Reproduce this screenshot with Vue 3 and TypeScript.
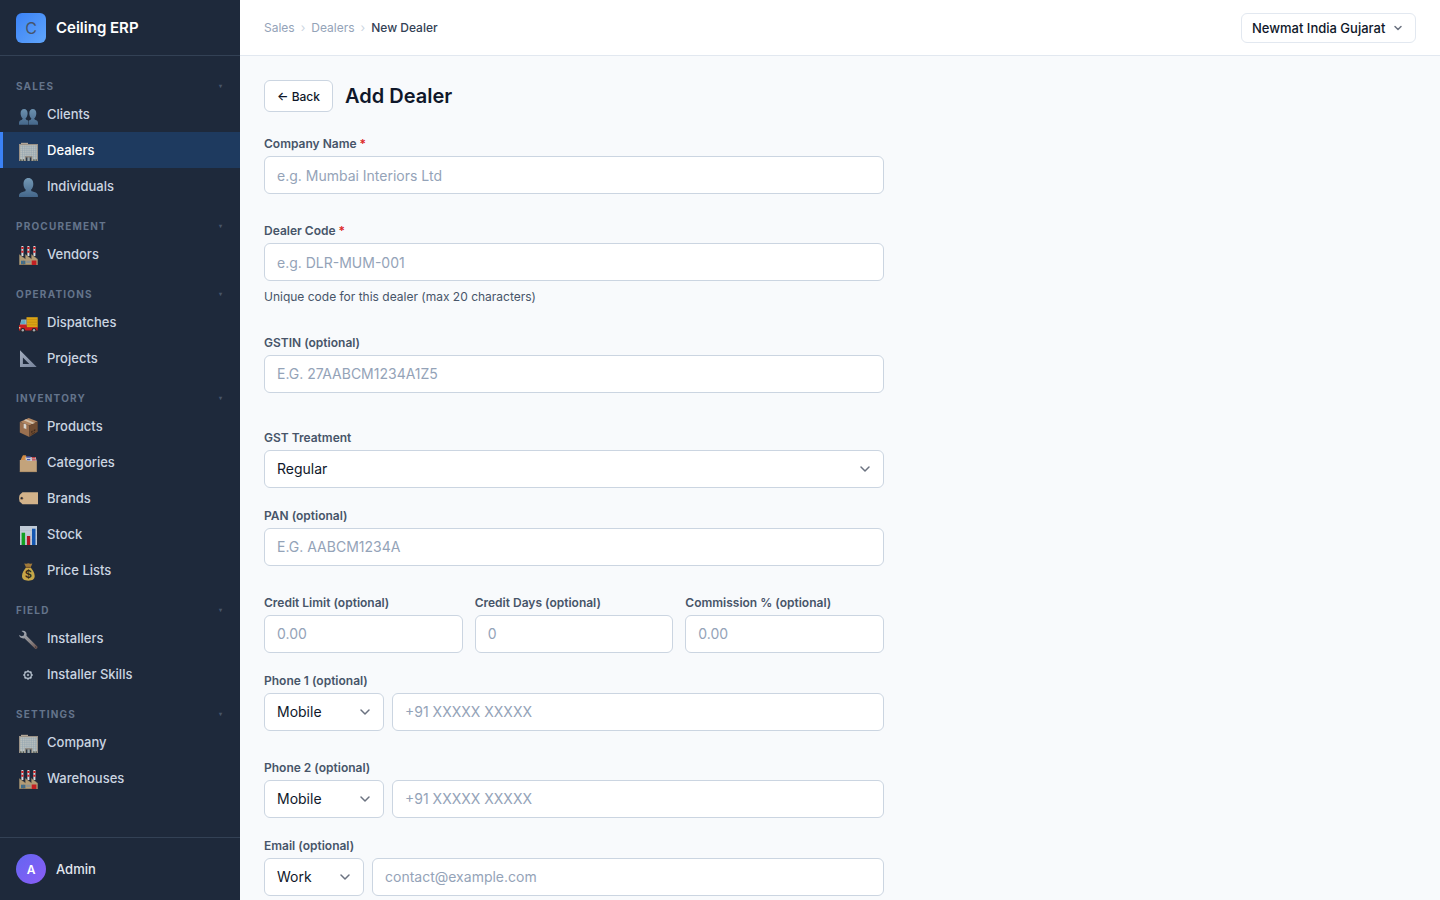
<script setup lang="ts">
import { ref } from 'vue'

interface NavItem {
  icon: string
  label: string
}
interface NavGroup {
  title: string
  items: NavItem[]
}

const groups: NavGroup[] = [
  {
    title: 'Sales',
    items: [
      { icon: 'people', label: 'Clients' },
      { icon: 'building', label: 'Dealers' },
      { icon: 'person', label: 'Individuals' },
    ],
  },
  { title: 'Procurement', items: [{ icon: 'factory', label: 'Vendors' }] },
  {
    title: 'Operations',
    items: [
      { icon: 'truck', label: 'Dispatches' },
      { icon: 'triangle', label: 'Projects' },
    ],
  },
  {
    title: 'Inventory',
    items: [
      { icon: 'box', label: 'Products' },
      { icon: 'dividers', label: 'Categories' },
      { icon: 'tag', label: 'Brands' },
      { icon: 'chart', label: 'Stock' },
      { icon: 'money', label: 'Price Lists' },
    ],
  },
  {
    title: 'Field',
    items: [
      { icon: 'wrench', label: 'Installers' },
      { icon: 'gear', label: 'Installer Skills' },
    ],
  },
  {
    title: 'Settings',
    items: [
      { icon: 'building', label: 'Company' },
      { icon: 'factory', label: 'Warehouses' },
    ],
  },
]

const active = ref('Dealers')
const collapsed = ref<string[]>([])

function toggle(title: string) {
  collapsed.value = collapsed.value.includes(title)
    ? collapsed.value.filter((t) => t !== title)
    : [...collapsed.value, title]
}

const branch = ref('Newmat India Gujarat')
const form = ref({
  company: '',
  code: '',
  gstin: '',
  treatment: 'Regular',
  pan: '',
  creditLimit: '',
  creditDays: '',
  commission: '',
  phone1Type: 'Mobile',
  phone1: '',
  phone2Type: 'Mobile',
  phone2: '',
  emailType: 'Work',
  email: '',
})
</script>

<template>
  <div class="app">
    <svg class="defs" aria-hidden="true">
      <defs>
        <linearGradient id="bust" x1="0" y1="0" x2="0" y2="20" gradientUnits="userSpaceOnUse">
          <stop offset="0" stop-color="#7398b5" />
          <stop offset="1" stop-color="#426488" />
        </linearGradient>
        <linearGradient id="steel" x1="0" y1="0" x2="1" y2="1">
          <stop offset="0" stop-color="#a9b3bf" />
          <stop offset="0.6" stop-color="#8a8688" />
          <stop offset="1" stop-color="#6a4f49" />
        </linearGradient>
        <linearGradient id="slate" x1="0" y1="0" x2="1" y2="1">
          <stop offset="0" stop-color="#a3adbe" />
          <stop offset="1" stop-color="#76829a" />
        </linearGradient>
      </defs>
      <symbol id="people" viewBox="0 0 20 20">
        <g fill="url(#bust)">
          <path d="M0 18.700v-1.700c0-2 1.200-2.800 3-3.300l.7-1.200C2.300 11.300 1.600 9.500 1.600 7.300 1.600 4.600 2.900 3 5.100 3s3.500 1.600 3.500 4.300c0 2.200-.7 4-2.100 5.200l.7 1.200c1.100.3 1.700.6 2 1.100v3.900z" />
          <path d="M9.700 18.700v-3.900c.4-.5 1-.8 2-1.100l.7-1.200c-1.400-1.200-2.100-3-2.100-5.200C10.300 4.600 11.600 3 13.800 3s3.500 1.600 3.500 4.300c0 2.200-.7 4-2.100 5.200l.7 1.200c1.900.5 3.100 1.300 3.100 3.300v1.700z" />
        </g>
      </symbol>
      <symbol id="person" viewBox="0 0 20 20">
        <path fill="url(#bust)" d="M0 19v-1.500c0-2.300 2.800-3.600 6.300-4.300l.5-1.500C5.300 10.500 4.500 8.600 4.500 6 4.500 2.400 6.300 0 9.400 0s4.900 2.400 4.900 6c0 2.600-.8 4.500-2.300 5.700l.5 1.500c3.600.7 6.400 2 6.400 4.300V19z" />
      </symbol>
      <symbol id="building" viewBox="0 0 20 20">
        <path fill="#b3a797" d="M2 .8h7v1.700H2z" />
        <path fill="#9a9186" d="M0 2h19v17H0z" />
        <path fill="#bcc2bf" d="M1.200 3.200h16.600V18.500H1.200z" />
        <path stroke="#8fa3ae" stroke-width="0.500" d="M1.200 4.700h16.600M1.200 6.700h16.600M1.200 8.700h16.600M1.200 10.700h16.600M1.200 12.700h16.600M1.200 14.700h16.600M3.500 3.400v15M5.700 3.400v15M7.900 3.400v15M10.100 3.400v15M12.300 3.400v15M14.500 3.400v15M16.500 3.400v15" />
        <path fill="#8b8378" d="M6 14.200h7.300V19H6z" />
        <path fill="#27384a" d="M7 15.500h1.400V19H7zM10.800 15.500h1.400V19h-1.400z" />
        <path fill="#8fa3ad" d="M8.700 15.500h1.800V19H8.700z" />
        <path fill="#4f564e" d="M1.200 17.300h1.300V19H1.200zM3.800 17.300h1.300V19H3.800zM14.300 17.300h1.300V19h-1.300zM16.600 17.300h1.200V19h-1.200z" />
      </symbol>
      <symbol id="factory" viewBox="0 0 20 20">
        <path fill="#d8dde0" d="M2.400 0h2v10h-2zM8.400 0h2v10h-2zM14.400 0h2v10h-2z" />
        <path fill="#cf2024" d="M2.300 1h2.200v2H2.300zM8.300 1h2.200v2H8.300zM14.300 1h2.200v2h-2.200zM2.300 4.800h2.200v2H2.300zM8.300 4.800h2.200v2H8.300zM14.300 4.800h2.200v2h-2.200z" />
        <path fill="#b29c76" d="M.3 8.500 6.400 13V8.500l6.100 4.500V8.500l6.200 4.700V19H.3z" />
        <path fill="none" stroke="#8c7857" stroke-width="0.500" d="m.3 8.500 6.100 4.500V8.500l6.100 4.500V8.500l6.200 4.700" />
        <path fill="#3d6d8f" d="M2 14.700h4.400v3.700H2z" />
        <path fill="#8b9294" d="M7.300 14.700h4.400V17H7.300z" />
        <path fill="#c31f23" d="M12.700 14.500h4.700V19h-4.700z" />
        <path fill="#7c6a50" d="M0 18.400h12.700v.6H0zM4 14.700h.5v3.700H4z" />
      </symbol>
      <symbol id="truck" viewBox="0 0 20 20">
        <path fill="#dca514" d="M7.500 3.200h11.200v10.600H7.500z" />
        <path stroke="#b98510" stroke-width="0.600" d="M7.500 5.600h11.200M7.500 8.200h11.200M7.500 10.800h11.200" />
        <path fill="#a7b7c0" d="M2.300 5.500h5.200v6H.8z" />
        <path fill="#61abc6" d="M2.800 6.300h3.500v3.800H1.500z" />
        <path fill="#c91e20" d="M0 11.600 1.300 10.400h6.200v2.800h11.200v3.300H0z" />
        <path fill="#e8c9a0" d="M0 13h1.400v1.400H0z" />
        <circle cx="3.800" cy="16.300" r="2.400" fill="#25282d" />
        <circle cx="15" cy="16.300" r="2.400" fill="#25282d" />
        <circle cx="3.800" cy="16.300" r="1.200" fill="#a3abb1" />
        <circle cx="15" cy="16.300" r="1.200" fill="#a3abb1" />
      </symbol>
      <symbol id="triangle" viewBox="0 0 20 20">
        <path fill="url(#slate)" fill-rule="evenodd" d="M1 .3 17.700 17H1zM3.900 7.500v6.400h6.400z" />
      </symbol>
      <symbol id="box" viewBox="0 0 20 20">
        <path fill="#b18662" d="M9.700 0 18.700 3.500 10.300 7.500.8 4z" />
        <path fill="#9a7050" d="m.8 4 9.500 3.500V19L.8 14.600z" />
        <path fill="#6f4c32" d="m10.300 7.500 8.400-4v10.300L10.300 19z" />
        <path fill="#d5c2ab" d="m4.800 2.200 2.300-1 8.700 3.700-2.400 1.200z" />
        <path fill="#d9d6d0" d="m4.700 5.500 2.600 1v4.800l-1.200-.7-1.400-.3z" />
        <path fill="#3e2b1e" d="m12.200 13.200 1.400-.8v1.800l-1.400.8zM14.700 12l1.600-.9v1.600l-1.600.9zM12.500 16l3.500-2v.7l-3.500 2z" />
      </symbol>
      <symbol id="dividers" viewBox="0 0 20 20">
        <path fill="#d08b45" d="M1.500 6.500 3 3l1-1.700h2.700L8 3v4H1.500z" />
        <path fill="#c7cad0" d="M6.500 3h10.200l1 4H6.500z" />
        <path fill="#4453a8" d="M7.300 2.200h4.300v1.600H7.300zM8 5h3.200v1.200H8z" />
        <path fill="#c33d40" d="M12.700 3h3.800v1.400h-3.800zM13 5.300h3.800v1.300H13z" />
        <path fill="#c3a37b" d="M.8 6h6.500l1.200.9h9.300V18H.8z" />
        <path stroke="#9d825e" stroke-width="0.600" d="M.8 17.700h17" />
      </symbol>
      <symbol id="tag" viewBox="0 0 20 20">
        <path fill="#d2b28a" d="M3.500 2.200H19v12H3.500L.6 11.400Q-.4 8.200.6 5z" />
        <circle cx="2.700" cy="8.200" r="1.500" fill="#8d6d4b" />
        <circle cx="2.700" cy="8.200" r="0.900" fill="#1e293b" />
      </symbol>
      <symbol id="chart" viewBox="0 0 20 20">
        <path fill="#c0cad6" d="M1 0h17v19H1z" />
        <path stroke="#a8b5c5" stroke-width="0.400" d="M1 4.500h17M1 9h17M1 13.500h17" />
        <path fill="#11a022" d="M2.600 6.700h3.500V19H2.600z" />
        <path fill="#b31525" d="M7.900 10h3.300v9H7.900z" />
        <path fill="#1456b0" d="M13 2.700h3.500V19H13z" />
      </symbol>
      <symbol id="money" viewBox="0 0 20 20">
        <path fill="#a17a3b" d="M5.200 1.400 7.300 1.800l2-.6 2 .6 2.100-.4-1.700 3.800H7z" />
        <path fill="#c7a648" d="M7 5.600h4.700c1.600 2.200 4 5 4 8.500 0 3.200-2 4.600-6.300 4.600S3 17.300 3 14.100c0-3.500 2.400-6.300 4-8.500z" />
        <path stroke="#765026" d="M6.800 5.300h5" />
      </symbol>
      <symbol id="wrench" viewBox="0 0 20 20">
        <path fill="url(#steel)" d="M2.500 1C5-.1 7.500 1.500 7.600 4.200l-.1 1.600L18.300 16.500c.9 1.100-.9 3-2.100 2.200L5.400 8.200C3.100 8.900.5 7.600.1 5.100l2.400 1.200 2.300-.8.5-2.500z" />
        <circle cx="16.600" cy="17" r="0.600" fill="#2c2b31" />
      </symbol>
      <symbol id="gear" viewBox="0 0 20 20">
        <g fill="none" stroke="#b5c0cd">
          <circle cx="9" cy="9" r="3.400" stroke-width="1.200" />
          <circle cx="9" cy="9" r="0.800" />
          <path stroke-width="1.500" d="M9 4.200v1.500M9 12.300v1.500M4.200 9h1.500M12.300 9h1.500M5.600 5.600l1 1M11.400 11.400l1 1M12.400 5.600l-1 1M6.600 11.400l-1 1" />
        </g>
      </symbol>
    </svg>

    <aside class="sidebar">
      <div class="brand">
        <span class="logo">C</span>
        <span class="brand-name">Ceiling ERP</span>
      </div>
      <nav class="nav" aria-label="Main">
        <section v-for="g in groups" :key="g.title">
          <button class="group" type="button" @click="toggle(g.title)">
            <span>{{ g.title }}</span>
            <span class="arrow">▾</span>
          </button>
          <template v-if="!collapsed.includes(g.title)">
            <a
              v-for="item in g.items"
              :key="item.label"
              href="#"
              class="item"
              :class="{ active: active === item.label }"
              @click.prevent="active = item.label"
            >
              <svg class="icon" viewBox="0 0 20 20" aria-hidden="true">
                <use :href="'#' + item.icon" />
                <text v-if="item.icon === 'money'" x="9.400" y="16" class="coin">$</text>
              </svg>
              <span>{{ item.label }}</span>
            </a>
          </template>
        </section>
      </nav>
      <div class="user">
        <span class="avatar">A</span>
        <span>Admin</span>
      </div>
    </aside>

    <div class="main">
      <header class="topbar">
        <nav class="crumbs" aria-label="Breadcrumb">
          <a href="#">Sales</a>
          <span class="sep">›</span>
          <a href="#">Dealers</a>
          <span class="sep">›</span>
          <span class="here">New Dealer</span>
        </nav>
        <div class="select branch">
          <select v-model="branch" aria-label="Branch">
            <option>Newmat India Gujarat</option>
          </select>
          <svg viewBox="0 0 12 12" aria-hidden="true"><path d="M3 4.500 6 7.500l3-3" /></svg>
        </div>
      </header>

      <main class="content">
        <div class="heading">
          <button class="back" type="button">← Back</button>
          <h1>Add Dealer</h1>
        </div>

        <form class="form" @submit.prevent>
          <div class="field roomy">
            <label for="company">Company Name <span class="req">*</span></label>
            <input id="company" v-model="form.company" type="text" placeholder="e.g. Mumbai Interiors Ltd" required />
          </div>

          <div class="field roomy">
            <label for="code">Dealer Code <span class="req">*</span></label>
            <input id="code" v-model="form.code" type="text" maxlength="20" placeholder="e.g. DLR-MUM-001" required />
            <p class="hint">Unique code for this dealer (max 20 characters)</p>
          </div>

          <div class="field spacious">
            <label for="gstin">GSTIN (optional)</label>
            <input id="gstin" v-model="form.gstin" class="upper" type="text" placeholder="e.g. 27AABCM1234A1Z5" />
          </div>

          <div class="field">
            <label for="treatment">GST Treatment</label>
            <div class="select">
              <select id="treatment" v-model="form.treatment">
                <option>Regular</option>
                <option>Composition</option>
                <option>Unregistered</option>
              </select>
              <svg viewBox="0 0 12 12" aria-hidden="true"><path d="M2 4l4 4 4-4" /></svg>
            </div>
          </div>

          <div class="field roomy">
            <label for="pan">PAN (optional)</label>
            <input id="pan" v-model="form.pan" class="upper" type="text" placeholder="e.g. AABCM1234A" />
          </div>

          <div class="columns">
            <div class="field">
              <label for="limit">Credit Limit (optional)</label>
              <input id="limit" v-model="form.creditLimit" type="text" inputmode="decimal" placeholder="0.00" />
            </div>
            <div class="field">
              <label for="days">Credit Days (optional)</label>
              <input id="days" v-model="form.creditDays" type="text" inputmode="numeric" placeholder="0" />
            </div>
            <div class="field">
              <label for="commission">Commission % (optional)</label>
              <input id="commission" v-model="form.commission" type="text" inputmode="decimal" placeholder="0.00" />
            </div>
          </div>

          <div class="field roomy">
            <label for="phone1">Phone 1 (optional)</label>
            <div class="pair">
              <div class="select">
                <select v-model="form.phone1Type" aria-label="Phone 1 type">
                  <option>Mobile</option>
                  <option>Office</option>
                </select>
                <svg viewBox="0 0 12 12" aria-hidden="true"><path d="M2 4l4 4 4-4" /></svg>
              </div>
              <input id="phone1" v-model="form.phone1" type="tel" placeholder="+91 XXXXX XXXXX" />
            </div>
          </div>

          <div class="field">
            <label for="phone2">Phone 2 (optional)</label>
            <div class="pair">
              <div class="select">
                <select v-model="form.phone2Type" aria-label="Phone 2 type">
                  <option>Mobile</option>
                  <option>Office</option>
                </select>
                <svg viewBox="0 0 12 12" aria-hidden="true"><path d="M2 4l4 4 4-4" /></svg>
              </div>
              <input id="phone2" v-model="form.phone2" type="tel" placeholder="+91 XXXXX XXXXX" />
            </div>
          </div>

          <div class="field">
            <label for="email">Email (optional)</label>
            <div class="pair narrow">
              <div class="select">
                <select v-model="form.emailType" aria-label="Email type">
                  <option>Work</option>
                  <option>Personal</option>
                </select>
                <svg viewBox="0 0 12 12" aria-hidden="true"><path d="M2 4l4 4 4-4" /></svg>
              </div>
              <input id="email" v-model="form.email" type="email" placeholder="contact@example.com" />
            </div>
          </div>
        </form>
      </main>
    </div>
  </div>
</template>

<style>
body {
  margin: 0;
}
</style>

<style scoped>
* {
  box-sizing: border-box;
}
.app {
  display: flex;
  height: 100vh;
  overflow: hidden;
  background: #f8fafc;
  color: #0f172a;
  font-family: Inter, sans-serif;
  font-size: 14px;
}
button,
input,
select {
  font-family: inherit;
}
.defs {
  position: absolute;
  width: 0;
  height: 0;
}
.coin {
  fill: #33291a;
  font-size: 11px;
  font-weight: 600;
  text-anchor: middle;
}

.sidebar {
  display: flex;
  flex-direction: column;
  flex: 0 0 240px;
  background: #1e293b;
  color: #cbd5e1;
}
.brand {
  display: flex;
  align-items: center;
  gap: 10px;
  height: 56px;
  padding: 0 16px;
  border-bottom: 1px solid #334155;
}
.logo {
  display: grid;
  place-items: center;
  width: 30px;
  height: 30px;
  border-radius: 6px;
  background: linear-gradient(135deg, #3b82f6, #60a5fa);
  color: #475569;
  font-size: 16px;
}
.brand-name {
  color: #fff;
  font-size: 15px;
  font-weight: 600;
}
.nav {
  flex: 1;
  min-height: 0;
  padding: 8px 0;
  overflow: hidden;
}
.group {
  display: flex;
  align-items: center;
  justify-content: space-between;
  width: 100%;
  padding: 16px 17px 4px 16px;
  border: 0;
  background: none;
  color: #64748b;
  font-size: 10px;
  font-weight: 700;
  line-height: 12px;
  letter-spacing: 1.2px;
  text-transform: uppercase;
  cursor: pointer;
}
.arrow {
  color: #475569;
  font-size: 6px;
}
.item {
  display: flex;
  align-items: center;
  gap: 8px;
  height: 36px;
  padding: 0 16px;
  border-left: 3px solid transparent;
  color: #cbd5e1;
  font-size: 13px;
  font-weight: 500;
  text-decoration: none;
}
.item.active {
  border-left-color: #3b82f6;
  background: #1e3a5f;
  color: #fff;
}
.icon {
  flex: none;
  width: 20px;
  height: 20px;
  margin-top: 4px;
}
.user {
  display: flex;
  align-items: center;
  gap: 10px;
  padding: 16px;
  border-top: 1px solid #334155;
  color: #e2e8f0;
  font-size: 13px;
  font-weight: 500;
}
.avatar {
  display: grid;
  place-items: center;
  width: 30px;
  height: 30px;
  border-radius: 50%;
  background: linear-gradient(135deg, #6366f1, #8b5cf6);
  color: #fff;
  font-size: 12px;
  font-weight: 600;
}

.main {
  flex: 1;
  min-width: 0;
}
.topbar {
  display: flex;
  align-items: center;
  justify-content: space-between;
  height: 56px;
  padding: 0 24px;
  border-bottom: 1px solid #e2e8f0;
  background: #fff;
}
.crumbs {
  display: flex;
  align-items: center;
  gap: 6px;
  color: #94a3b8;
  font-size: 12px;
}
.crumbs a {
  color: inherit;
  text-decoration: none;
}
.sep {
  color: #cbd5e1;
}
.here {
  color: #334155;
  font-weight: 500;
}

.content {
  padding: 24px;
}
.heading {
  display: flex;
  align-items: center;
  gap: 12px;
  margin-bottom: 24px;
}
.back {
  height: 32px;
  padding: 0 12px;
  border: 1px solid #cbd5e1;
  border-radius: 6px;
  background: #fff;
  color: #0f172a;
  font-size: 12px;
  font-weight: 500;
}
h1 {
  margin: 0;
  font-size: 20px;
  font-weight: 600;
  line-height: 32px;
}
.form {
  max-width: 620px;
}
.field {
  margin-bottom: 20px;
}
.field.roomy {
  margin-bottom: 29px;
}
.field.spacious {
  margin-bottom: 37px;
}
label {
  display: block;
  margin-bottom: 4px;
  color: #475569;
  font-size: 12px;
  font-weight: 600;
  line-height: 16px;
}
.req {
  color: #dc2626;
}
input,
select {
  display: block;
  width: 100%;
  min-width: 0;
  height: 38px;
  padding: 0 12px 2px;
  border: 1px solid #cbd5e1;
  border-radius: 6px;
  background: #fff;
  color: #0f172a;
  font-size: 14px;
}
input:required {
  padding-bottom: 0;
}
input::placeholder {
  color: #94a3b8;
  opacity: 1;
}
.upper {
  text-transform: uppercase;
}
.hint {
  margin: 7px 0 0;
  color: #475569;
  font-size: 12px;
  line-height: 18px;
}
.columns {
  display: grid;
  grid-template-columns: repeat(3, 1fr);
  gap: 12px;
}
.pair {
  display: grid;
  grid-template-columns: 120px 1fr;
  gap: 8px;
}
.pair.narrow {
  grid-template-columns: 100px 1fr;
}
.select {
  display: grid;
  align-items: center;
}
.select > * {
  grid-area: 1 / 1;
}
.select select {
  appearance: none;
  padding-right: 32px;
}
.select svg {
  justify-self: end;
  width: 12px;
  height: 12px;
  margin-right: 13px;
  fill: none;
  stroke: #6b7280;
  stroke-width: 1.5;
  stroke-linecap: round;
  stroke-linejoin: round;
  pointer-events: none;
}
.select.branch select {
  height: 30px;
  padding: 0 29px 0 10px;
  border-color: #e2e8f0;
  font-size: 13px;
  font-weight: 500;
}
.select.branch svg {
  margin-right: 12px;
}
</style>
